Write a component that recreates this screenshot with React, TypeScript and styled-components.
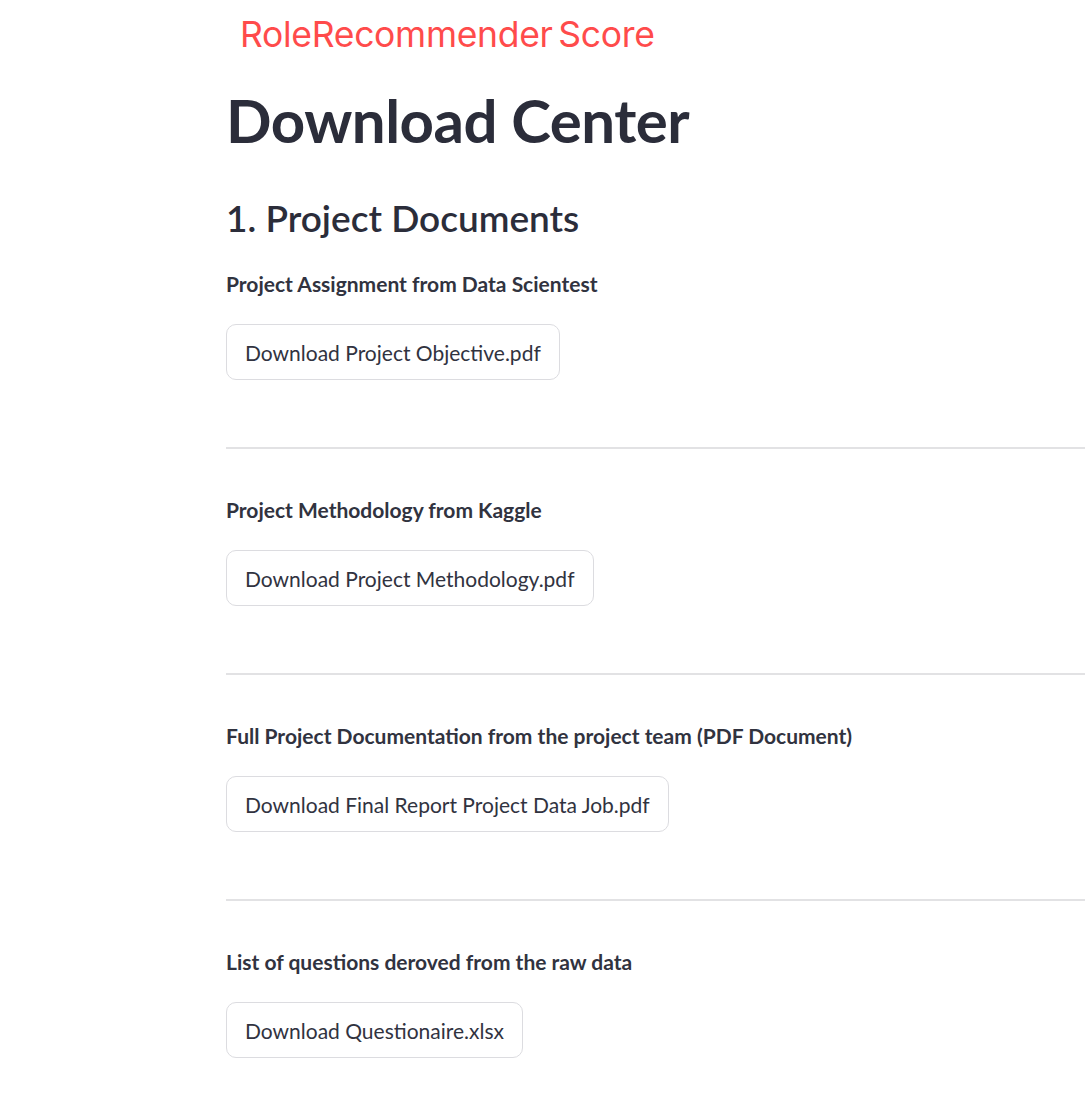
import React from "react";
import styled, { createGlobalStyle } from "styled-components";

const Global = createGlobalStyle`
  html, body { margin: 0; padding: 0; background: #ffffff; }
  body { font-family: "Lato", "Noto Sans", sans-serif; color: #31333f; }
`;

const Page = styled.main`
  display: flex;
  flex-direction: column;
  padding: 14px 0 40px 226px;
  width: 1085px;
  box-sizing: border-box;
  overflow: hidden;
`;

const Brand = styled.div`
  font-family: "Inter", "Liberation Sans", sans-serif;
  font-size: 35.5px;
  font-weight: 400;
  color: #ff4b4b;
  margin-left: 14px;
  line-height: 42px;
  letter-spacing: -0.3px;
  word-spacing: -4px;
`;

const Title = styled.h1`
  margin: 24px 0 0 0;
  font-size: 60px;
  font-weight: 700;
  line-height: 80px;
  color: #2b2d3a;
  letter-spacing: -0.5px;
`;

const SectionTitle = styled.h2`
  margin: 34px 0 0 0;
  font-size: 37px;
  font-weight: 600;
  line-height: 48px;
  color: #2b2d3a;
`;

const Item = styled.section<{ $first?: boolean }>`
  display: flex;
  flex-direction: column;
  align-items: flex-start;
  padding-top: ${(p) => (p.$first ? "28px" : "47px")};
`;

const Label = styled.div`
  font-size: 21px;
  font-weight: 700;
  line-height: 28px;
  color: #31333f;
`;

const Button = styled.button`
  margin-top: 26px;
  height: 56px;
  padding: 0 18px;
  border: 1.5px solid #dcdce0;
  border-radius: 10px;
  background: #ffffff;
  font-family: "Lato", "Noto Sans", sans-serif;
  font-size: 21px;
  color: #31333f;
  cursor: pointer;
`;

const Divider = styled.hr`
  width: 100%;
  margin: 67px 0 0 0;
  border: none;
  border-top: 2px solid #e2e2e4;
`;

const items = [
  { label: "Project Assignment from Data Scientest", file: "Download Project Objective.pdf" },
  { label: "Project Methodology from Kaggle", file: "Download Project Methodology.pdf" },
  { label: "Full Project Documentation from the project team (PDF Document)", file: "Download Final Report Project Data Job.pdf" },
  { label: "List of questions deroved from the raw data", file: "Download Questionaire.xlsx" },
];

export default function App() {
  return (
    <>
      <Global />
      <Page>
        <Brand>RoleRecommender Score</Brand>
        <Title>Download Center</Title>
        <SectionTitle>1. Project Documents</SectionTitle>
        {items.map((it, i) => (
          <React.Fragment key={it.file}>
            <Item $first={i === 0}>
              <Label>{it.label}</Label>
              <Button>{it.file}</Button>
            </Item>
            {i < items.length - 1 && <Divider />}
          </React.Fragment>
        ))}
      </Page>
    </>
  );
}
